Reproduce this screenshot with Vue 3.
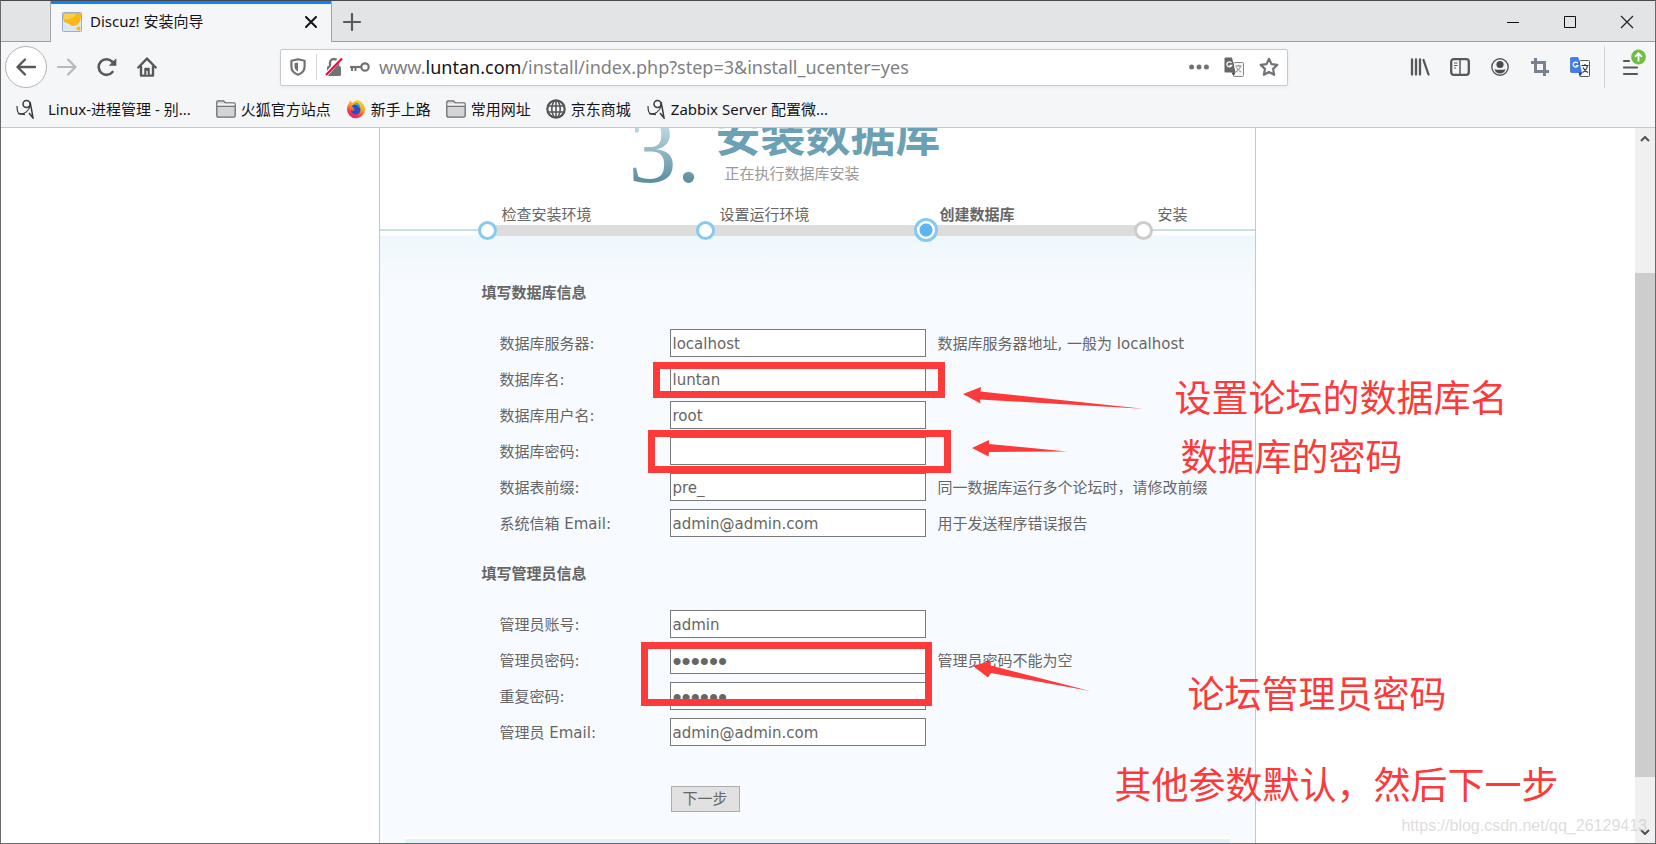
<script setup>
import { reactive } from 'vue'

const steps = [
  { label: '检查安装环境', state: 'done' },
  { label: '设置运行环境', state: 'done' },
  { label: '创建数据库', state: 'current' },
  { label: '安装', state: 'todo' },
]

const sections = reactive([
  {
    title: '填写数据库信息',
    fields: [
      { id: 'dbhost', label: '数据库服务器:', type: 'text', value: 'localhost', hint: '数据库服务器地址, 一般为 localhost' },
      { id: 'dbname', label: '数据库名:', type: 'text', value: 'luntan', hint: '' },
      { id: 'dbuser', label: '数据库用户名:', type: 'text', value: 'root', hint: '' },
      { id: 'dbpw', label: '数据库密码:', type: 'text', value: '', hint: '' },
      { id: 'tablepre', label: '数据表前缀:', type: 'text', value: 'pre_', hint: '同一数据库运行多个论坛时，请修改前缀' },
      { id: 'adminemail', label: '系统信箱 Email:', type: 'text', value: 'admin@admin.com', hint: '用于发送程序错误报告' },
    ],
  },
  {
    title: '填写管理员信息',
    fields: [
      { id: 'username', label: '管理员账号:', type: 'text', value: 'admin', hint: '' },
      { id: 'password', label: '管理员密码:', type: 'password', value: '123456', hint: '管理员密码不能为空' },
      { id: 'password2', label: '重复密码:', type: 'password', value: '123456', hint: '' },
      { id: 'email', label: '管理员 Email:', type: 'text', value: 'admin@admin.com', hint: '' },
    ],
  },
])

const bookmarks = [
  { icon: 'swirl', text: 'Linux-进程管理 - 别...' },
  { icon: 'folder', text: '火狐官方站点' },
  { icon: 'firefox', text: '新手上路' },
  { icon: 'folder', text: '常用网址' },
  { icon: 'globe', text: '京东商城' },
  { icon: 'swirl', text: 'Zabbix Server 配置微...' },
]
</script>

<template>
  <div class="window">
    <header class="tabs">
      <div class="tab">
        <svg width="20" height="20" viewBox="0 0 20 20">
          <rect x=".5" y=".5" width="19" height="19" rx="1" fill="#dce6f5" stroke="#9aaed0" />
          <path d="M1 1h18v4c0 5-3 9-8 9-3 0-4-3-6-3S1 9 1 6z" fill="#fbb917" />
          <path d="M2 2h12c-2 4-7 6-12 5z" fill="#fdd04a" />
          <circle cx="16.500" cy="16.500" r="2" fill="#fbb917" />
        </svg>
        <span class="tab-title">Discuz! 安装向导</span>
        <button class="plain" aria-label="关闭标签页">
          <svg width="12" height="12" viewBox="0 0 12 12"><path d="M1 1l10 10M11 1L1 11" stroke="#15141a" stroke-width="2" stroke-linecap="round" /></svg>
        </button>
      </div>
      <button class="plain newtab" aria-label="新建标签页">
        <svg width="18" height="18" viewBox="0 0 18 18"><path d="M9 1v16M1 9h16" stroke="#5a5a5f" stroke-width="2.200" stroke-linecap="round" /></svg>
      </button>
      <div class="controls">
        <button class="plain" aria-label="最小化"><svg width="14" height="14" viewBox="0 0 14 14"><path d="M1 7.500h12" stroke="#111" /></svg></button>
        <button class="plain" aria-label="最大化"><svg width="14" height="14" viewBox="0 0 14 14"><path d="M1.500 1.500h11v11h-11z" fill="none" stroke="#111" /></svg></button>
        <button class="plain" aria-label="关闭"><svg width="14" height="14" viewBox="0 0 14 14"><path d="M1 1l12 12M13 1L1 13" stroke="#222" stroke-width="1.200" /></svg></button>
      </div>
    </header>

    <nav class="toolbar">
      <button class="plain back" aria-label="后退">
        <svg width="20" height="20" viewBox="0 0 20 20" fill="none" stroke="#58585c" stroke-width="2.400" stroke-linecap="round" stroke-linejoin="round"><path d="M19 10H2M9 2.500L1.500 10 9 17.500" /></svg>
      </button>
      <button class="plain cell" aria-label="前进">
        <svg width="20" height="20" viewBox="0 0 20 20" fill="none" stroke="#b9b9bd" stroke-width="2.200" stroke-linecap="round" stroke-linejoin="round"><path d="M1 10h17M11 2.500l7.500 7.500L11 17.500" /></svg>
      </button>
      <button class="plain cell" aria-label="刷新">
        <svg width="20" height="20" viewBox="0 0 20 20" fill="none"><path d="M15.500 15A7.800 7.800 0 1 1 15 4.500l2.500 2.500" stroke="#58585c" stroke-width="2.600" stroke-linecap="round" /><path d="M19.300 1.200v7.600h-7.600z" fill="#58585c" /></svg>
      </button>
      <button class="plain cell" aria-label="主页">
        <svg width="20" height="20" viewBox="0 0 20 20" fill="none" stroke="#58585c" stroke-width="2.400" stroke-linecap="round" stroke-linejoin="round"><path d="M1.300 10.500L10 1.600l8.700 8.900" /><path d="M4 9.500V18.600h12V9.500" /><path d="M8 18v-6.500h4V18" fill="#58585c" stroke-width="1.500" /><path d="M10 14.500v3" stroke="#f5f6f7" stroke-width="1.300" /></svg>
      </button>

      <div class="urlbar">
        <svg class="shield" width="16" height="18" viewBox="0 0 16 18"><path d="M8 1.200l6.600 1.600v5.700c0 3.700-2.500 6.800-6.600 8.300-4.100-1.500-6.600-4.600-6.600-8.300V2.800z" fill="none" stroke="#737377" stroke-width="2.200" stroke-linejoin="round" /><path d="M8 4.500v9C5.500 12.300 4.500 10.500 4.500 8.500V5.300z" fill="#737377" /></svg>
        <i class="bar"></i>
        <svg width="18" height="20" viewBox="0 0 18 20"><path d="M5 10V6a4 4 0 0 1 8 0v4" fill="none" stroke="#737377" stroke-width="2.400" /><rect x="2" y="9" width="14" height="10" rx="1.500" fill="#737377" /><path d="M0 19L16 1" stroke="#fff" stroke-width="4" /><path d="M1 18L17 1.500" stroke="#ff0039" stroke-width="2.200" /></svg>
        <svg width="20" height="12" viewBox="0 0 20 12" fill="none" stroke="#737377"><circle cx="15" cy="6" r="3.700" stroke-width="2.200" /><path d="M0 6h11" stroke-width="2.200" /><path d="M2 6v4M5.500 6v4" stroke-width="2" /></svg>
        <p class="url">www.<b>luntan.com</b>/install/index.php?step=3&amp;install_ucenter=yes</p>
        <svg width="20" height="6" viewBox="0 0 20 6" fill="#737377"><circle cx="2.600" cy="3" r="2.500" /><circle cx="10" cy="3" r="2.500" /><circle cx="17.400" cy="3" r="2.500" /></svg>
        <svg width="20" height="20" viewBox="0 0 20 20"><rect x="9.500" y="5.500" width="10" height="14" rx="1" fill="#f4f4f4" stroke="#888" /><path d="M11.500 9h6M14.500 8v1M16.500 9c-.5 2.500-2.500 5-5 6M12.500 10.500c1 2 2.500 3.500 4.500 4.500" fill="none" stroke="#888" /><path d="M.5 1.500Q.5.500 1.500.500H8l3.500 15H1.500Q.5 15.500.5 14.500z" fill="#666" /><path d="M7.500 15.500h4L9.500 19z" fill="#444" /><path d="M7.500 6A2.500 2.500 0 1 0 7.600 8.500H5.500" fill="none" stroke="#fff" stroke-width="1.300" /></svg>
        <svg width="20" height="20" viewBox="0 0 20 20"><path d="M10 1.800l2.500 5.300 5.800.8-4.200 4 1 5.900-5.100-2.800-5.100 2.800 1-5.900-4.200-4 5.800-.8z" fill="none" stroke="#737377" stroke-width="2.200" stroke-linejoin="round" /></svg>
      </div>

      <button class="plain cell" aria-label="书库">
        <svg width="20" height="18" viewBox="0 0 20 18" fill="none" stroke="#58585c" stroke-width="2.300" stroke-linecap="round"><path d="M2 1.500v15M6 1.500v15M10 1.500v15M13.500 2l5 14.500" /></svg>
      </button>
      <button class="plain cell" aria-label="侧栏">
        <svg width="20" height="18" viewBox="0 0 20 18" fill="none" stroke="#58585c"><rect x="1.200" y="1.200" width="17.600" height="15.600" rx="2.500" stroke-width="2.300" /><path d="M10 1v16" stroke-width="1.500" /><path d="M4 5h3.500M4 7.500h3.500M4 10h2" stroke-width="1.200" /></svg>
      </button>
      <button class="plain cell" aria-label="账户">
        <svg width="18" height="18" viewBox="0 0 18 18"><circle cx="9" cy="9" r="8.200" fill="none" stroke="#58585c" stroke-width="1.400" /><circle cx="9" cy="6.500" r="3.600" fill="#4a4a4f" /><path d="M3.500 11c1.500.8 3 .8 5.500.8s4 0 5.500-.8c-.6 2.800-2.600 4.500-5.500 4.500S4.100 13.800 3.500 11z" fill="#4a4a4f" /></svg>
      </button>
      <button class="plain cell" aria-label="截图">
        <svg width="18" height="18" viewBox="0 0 18 18" fill="none" stroke="#78818e" stroke-width="3"><path d="M0 4.500h13.500V18M4.500 0v13.500H18" /></svg>
      </button>
      <button class="plain cell" aria-label="翻译">
        <svg width="20" height="20" viewBox="0 0 20 20"><rect x="9.500" y="3.500" width="10" height="16" rx="1" fill="#f8f8f8" stroke="#555" /><path d="M11.500 8.500h7M15 7v1.500M17.500 8.500c-.5 3-3 6-5 7M13 10.500c1 2 2.500 4 5 5" fill="none" stroke="#333" stroke-width="1.200" /><path d="M.5 1.500Q.5.500 1.500.500H8l3.500 15H1.500Q.5 15.500.5 14.500z" fill="#3f7ef0" stroke="#2b5fc0" stroke-width=".6" /><path d="M8.500 15.500h4L10.500 19z" fill="#1d3f9c" /><path d="M7.800 6.200A2.500 2.500 0 1 0 7.900 8.700H5.800" fill="none" stroke="#fff" stroke-width="1.200" /></svg>
      </button>
      <i class="divider"></i>
      <button class="plain menu" aria-label="打开菜单">
        <svg width="26" height="28" viewBox="0 0 26 28"><path d="M3 13h5M3 19.500h13M3 26h13" stroke="#58585c" stroke-width="2.200" stroke-linecap="round" /><circle cx="17.500" cy="9" r="7.400" fill="#6fbe44" /><path d="M17.500 13.500V5.500M14 8.800l3.500-3.500L21 8.800" fill="none" stroke="#fff" stroke-width="1.800" /></svg>
      </button>
    </nav>

    <nav class="bookmarks">
      <a v-for="(b, i) in bookmarks" :key="i" href="#" :class="{ wide: i === 0 }">
        <svg v-if="b.icon === 'swirl'" width="20" height="20" viewBox="0 0 20 20" fill="none" stroke="#3b3b3b"><circle cx="11.500" cy="5" r="3.500" stroke-width="1.500" /><path d="M2 7c0 4 1 8 3.500 8 4 0 8.500-3 9.500-8" stroke-width="1.200" /><path d="M15 3c1.200 5 2 10 3 16l-4-5" stroke-width="1.500" /><path d="M3 14.500l7 1" stroke-width="1.500" /></svg>
        <svg v-else-if="b.icon === 'folder'" width="20" height="18" viewBox="0 0 20 18"><path d="M.8 15.500V2Q.8.800 2 .800h5.500L9.500 3H18q1.200 0 1.200 1.200v11.300q0 1.700-1.700 1.700h-15q-1.700 0-1.700-1.700z" fill="#d4d4d6" stroke="#6c6c70" stroke-width="1.300" /><path d="M1.500 3.500h17v2.500h-17z" fill="#f5f6f7" /><path d="M1 6.300h18" stroke="#6c6c70" stroke-width="1.200" /></svg>
        <svg v-else-if="b.icon === 'firefox'" width="20" height="20" viewBox="0 0 20 20">
          <defs><linearGradient id="fx" x1=".8" y1="0" x2=".3" y2="1"><stop offset="0" stop-color="#ffe226" /><stop offset=".45" stop-color="#ff9a1f" /><stop offset=".75" stop-color="#ff3647" /><stop offset="1" stop-color="#e31587" /></linearGradient></defs>
          <path d="M3 4l1-2.500L6.500 4C8 2.500 10 2 11 1c2 0 8 3 8 9.500a9 9 0 1 1-18-.5C1 7.500 2 5.500 3 4z" fill="url(#fx)" />
          <path d="M5.500 7.500c2-3 5-2.500 7-.5 3 2 2.500 7-1 8.300-3.500 1-6.500-1.500-6.500-4.300 1.500 1.200 3 1 4-.3-1.500 0-2-1.200-1.200-2.200z" fill="#2a4fc4" />
          <path d="M9 4.500c3 0 4.500 2 4.500 4" fill="none" stroke="#10b5f5" stroke-width="1.500" />
        </svg>
        <svg v-else width="20" height="20" viewBox="0 0 20 20" fill="none" stroke="#55555a"><circle cx="10" cy="10" r="8.700" stroke-width="2.200" /><ellipse cx="10" cy="10" rx="4.200" ry="8.500" stroke-width="1.600" /><path d="M10 1v18M2 7h16M2 13h16" stroke-width="1.500" /></svg>
        <span>{{ b.text }}</span>
      </a>
    </nav>

    <div class="viewport">
      <main class="page">
        <div class="panel">
          <div class="head">
            <div class="number">3.</div>
            <div>
              <h1>安装数据库</h1>
              <p>正在执行数据库安装</p>
            </div>
          </div>

          <ol class="steps">
            <li v-for="s in steps" :key="s.label" :class="s.state"><i></i>{{ s.label }}</li>
          </ol>

          <form class="form" @submit.prevent>
            <fieldset v-for="s in sections" :key="s.title">
              <legend>{{ s.title }}</legend>
              <div v-for="f in s.fields" :key="f.id" class="row">
                <label :for="f.id">{{ f.label }}</label>
                <input :id="f.id" v-model="f.value" :type="f.type" autocomplete="off" />
                <span>{{ f.hint }}</span>
              </div>
            </fieldset>
            <button class="next" type="submit">下一步</button>
          </form>
          <div class="foot"></div>

          <div class="mark m1"></div>
          <div class="mark m2"></div>
          <div class="mark m3"></div>
          <svg class="arrows" width="877" height="716" viewBox="379 128 877 716" fill="#fc3a3a">
            <path d="M963 394l18-7-.5 4.500L1143 408.700 980 399.500l.5 4z" />
            <path d="M972 448l17-8v4l78 7.500-78 .5-.5 4.500z" />
            <path d="M973 666l17.500-5v4.500L1090 691l-99-18-3 4.500z" />
          </svg>
          <p class="note n1">设置论坛的数据库名</p>
          <p class="note n2">数据库的密码</p>
          <p class="note n3">论坛管理员密码</p>
          <p class="note n4">其他参数默认，然后下一步</p>
        </div>
      </main>
      <div class="scrollbar">
        <svg width="10" height="6" viewBox="0 0 10 6"><path d="M1 5l4-4 4 4" fill="none" stroke="#505050" stroke-width="2" /></svg>
        <div class="track"><div class="thumb"></div></div>
        <svg width="10" height="6" viewBox="0 0 10 6"><path d="M1 1l4 4 4-4" fill="none" stroke="#505050" stroke-width="2" /></svg>
      </div>
    </div>
    <div class="watermark">https://blog.csdn.net/qq_26129413</div>
  </div>
</template>

<style>
body {
  margin: 0;
  overflow: hidden;
}
</style>

<style scoped>
* {
  box-sizing: border-box;
}
p, h1, ol {
  margin: 0;
  padding: 0;
}
svg {
  display: block;
  flex: none;
}
.window {
  position: relative;
  display: flex;
  flex-direction: column;
  height: 100vh;
  border: 1px solid #6a6a6c;
  border-top-color: #48484a;
  background: #fff;
  font-family: "Noto Sans", "Noto Sans CJK SC", sans-serif;
  font-size: 15px;
  color: #15141a;
}
.plain {
  display: flex;
  align-items: center;
  justify-content: center;
  padding: 0;
  border: 0;
  background: none;
}
.tabs {
  display: flex;
  height: 41px;
  padding-left: 49px;
  background: #e3e4e6;
  box-shadow: inset 0 -1px #9c9d9f;
}
.tab {
  display: flex;
  align-items: center;
  width: 282px;
  padding: 0 14px 0 11px;
  border: solid #a5a6a8;
  border-width: 0 1px;
  background: #f5f6f7;
  box-shadow: inset 0 3px #0a84ff;
}
.tab-title {
  flex: 1;
  padding: 0 0 2px 8px;
  white-space: nowrap;
}
.newtab {
  width: 40px;
}
.controls {
  display: flex;
  margin-left: auto;
}
.controls button {
  width: 57px;
}
.toolbar {
  display: flex;
  align-items: center;
  height: 50px;
  padding-left: 4px;
  background: #f5f6f7;
}
.back {
  width: 42px;
  height: 42px;
  border: 1px solid #b4b4b6;
  border-radius: 50%;
  background: #fff;
}
.cell {
  width: 40px;
  height: 40px;
}
.urlbar {
  display: flex;
  flex: 1;
  align-items: center;
  height: 37px;
  margin: 0 112px 0 113px;
  padding: 0 8px;
  gap: 15px;
  border: 1px solid #c9c9cb;
  border-radius: 2px;
  background: #fff;
  box-shadow: 0 1px 4px rgba(0, 0, 0, 0.06);
}
.urlbar svg {
  margin-right: -8px;
}
.urlbar svg.shield {
  margin: 0 -5px 0 1px;
}
.urlbar .url ~ svg {
  margin: 0;
}
.bar {
  width: 1px;
  height: 26px;
  margin-right: -7px;
  background: #d7d7db;
}
.url {
  flex: 1;
  padding-left: 2px;
  color: #808084;
  font-size: 18px;
  line-height: 24px;
  white-space: nowrap;
}
.url b {
  color: #15141a;
  font-weight: 400;
}
.divider {
  width: 1px;
  height: 42px;
  margin-left: 4px;
  background: #d2d2d5;
}
.menu {
  width: 50px;
  height: 42px;
  padding: 0 0 10px 7px;
}
.bookmarks {
  display: flex;
  align-items: center;
  height: 36px;
  padding: 0 0 2px 14px;
  gap: 15px;
  border-bottom: 1px solid #c6c8ca;
  background: #f5f6f7;
}
.bookmarks a {
  display: flex;
  align-items: center;
  gap: 5px;
  color: inherit;
  text-decoration: none;
  white-space: nowrap;
}
.bookmarks a.wide {
  gap: 13px;
  margin-right: 10px;
}
.viewport {
  display: flex;
  flex: 1;
  min-height: 0;
}
.page {
  flex: 1;
  padding-right: 2px;
  overflow: hidden;
}
.panel {
  position: relative;
  max-width: 877px;
  margin: -26px auto 0;
  border: solid #b5cdd6;
  border-width: 0 1px;
  background: #f7fbff;
  color: #666;
  font-family: "DejaVu Sans", "Noto Sans CJK SC", sans-serif;
}
.head {
  display: flex;
  gap: 15px;
  height: 103px;
  padding-left: 249px;
  background: #fff;
}
.number {
  background: linear-gradient(#c5dde8 20%, #4d8496 85%);
  background-clip: text;
  color: transparent;
  font: 96px/96px "Liberation Serif", serif;
}
.head h1 {
  color: #6ca1b5;
  font: 700 45px/62px "Noto Sans CJK SC", sans-serif;
}
.head p {
  padding-left: 9px;
  color: #999;
  line-height: 20px;
}
.steps {
  display: grid;
  grid-template-columns: 218px 220px 218px 1fr;
  height: 26px;
  padding-left: 107px;
  background: linear-gradient(#c9dfe7, #c9dfe7) 0 24px / 100% 2px no-repeat #fff;
  list-style: none;
  line-height: 20px;
}
.steps li {
  position: relative;
  padding-left: 15px;
}
.steps li:not(:last-child)::before {
  content: "";
  position: absolute;
  top: 20px;
  left: 0;
  width: 100%;
  height: 11px;
  background: #ddd;
}
.steps i {
  position: absolute;
  z-index: 1;
  top: 16px;
  left: -9px;
  width: 19px;
  height: 19px;
  border: 3px solid #86c9f2;
  border-radius: 50%;
  background: #fff;
}
.steps .current {
  font-weight: 700;
}
.steps .current i {
  top: 13px;
  left: -11px;
  width: 24px;
  height: 24px;
  background: radial-gradient(circle, #5cb5ee 6px, #fff 7px);
}
.steps .todo i {
  border-color: #ccc;
}
.form {
  padding: 52px 20px 24px 102px;
  background: linear-gradient(#fff 4px, #eef8fc 5px, #f3f9fd 30px, #f7fbff 60px);
}
fieldset {
  min-width: 0;
  margin: 0 0 23px;
  padding: 0;
  border: 0;
}
legend {
  margin-bottom: 22px;
  padding: 0;
  font-weight: 700;
  line-height: 20px;
}
.row {
  display: grid;
  grid-template-columns: 170px 256px 1fr;
  align-items: center;
  height: 36px;
  padding-left: 18px;
  line-height: 20px;
  white-space: nowrap;
}
.row label {
  padding-top: 2px;
}
.row input {
  width: 100%;
  height: 28px;
  padding: 2px 2px 0;
  border: 1px solid #7a7a7a;
  border-radius: 0;
  background: #fff;
  color: #666;
  font: inherit;
}
.row input[type="password"] {
  font: 26px/24px "Liberation Sans", sans-serif;
}
.row span {
  padding: 2px 0 0 12px;
}
.next {
  width: 69px;
  height: 26px;
  margin: 13px 0 0 189px;
  padding: 0;
  border: 1px solid #adadad;
  border-radius: 0;
  background: #e1e1e1;
  color: #666;
  font: inherit;
  line-height: 20px;
}
.foot {
  height: 40px;
  margin: 0 25px;
  border-top: 3px solid #fff;
  background: #e2f1fa;
}
.mark {
  position: absolute;
  border: 7px solid #fc3a3a;
}
.m1 {
  top: 260px;
  left: 273px;
  width: 292px;
  height: 36px;
}
.m2 {
  top: 328px;
  left: 268px;
  width: 303px;
  height: 43px;
}
.m3 {
  top: 540px;
  left: 261px;
  width: 291px;
  height: 64px;
}
.arrows {
  position: absolute;
  top: 26px;
  left: -1px;
}
.note {
  position: absolute;
  color: #fc3a3a;
  font: 37px/40px "Noto Sans CJK SC", sans-serif;
  white-space: nowrap;
}
.n1 {
  top: 274px;
  left: 795px;
}
.n2 {
  top: 333px;
  left: 801px;
}
.n3 {
  top: 570px;
  left: 808px;
}
.n4 {
  top: 661px;
  left: 735px;
}
.scrollbar {
  display: flex;
  flex-direction: column;
  align-items: center;
  width: 20px;
  padding: 8px 0;
  background: #f0f0f0;
}
.track {
  flex: 1;
  align-self: stretch;
  display: flex;
  flex-direction: column;
}
.track::before {
  content: "";
  flex: 131;
}
.track::after {
  content: "";
  flex: 52;
}
.thumb {
  flex: 504;
  background: #cdcdcd;
}
.watermark {
  position: absolute;
  right: 8px;
  bottom: 7px;
  color: rgba(185, 185, 185, 0.5);
  font: 16px/20px "Liberation Sans", sans-serif;
}
</style>
